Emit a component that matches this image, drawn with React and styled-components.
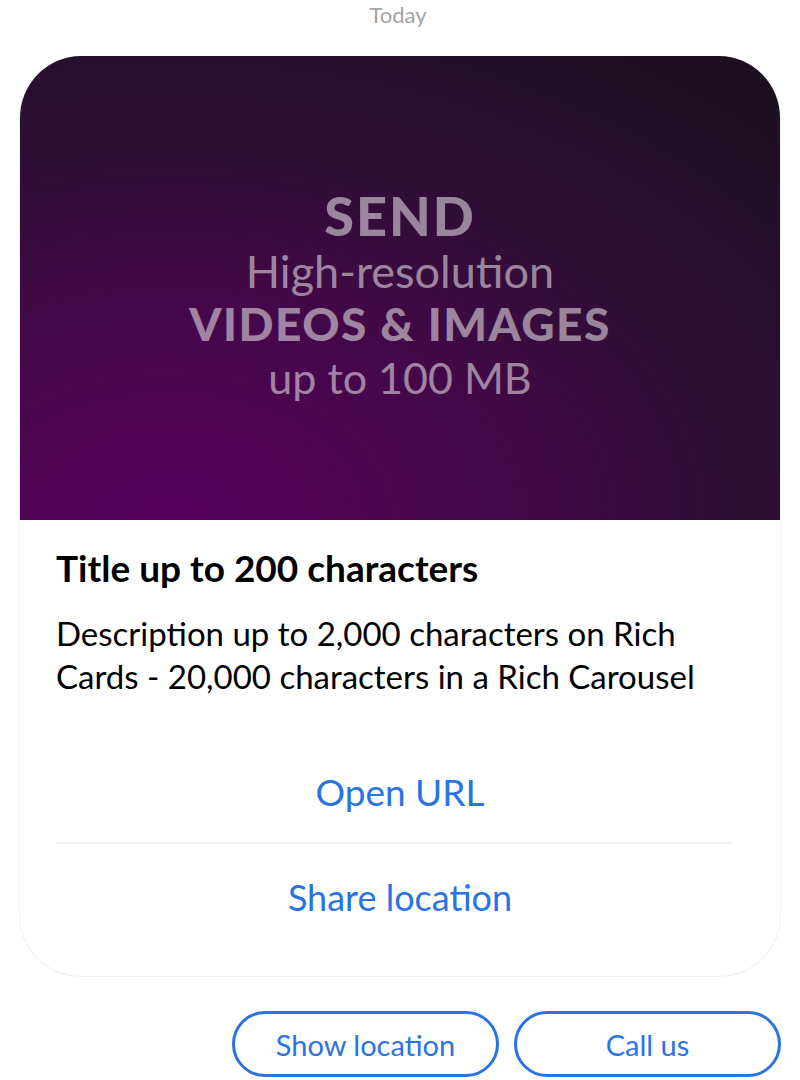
import React from "react";
import styled, { createGlobalStyle } from "styled-components";

const GlobalStyle = createGlobalStyle`
  body {
    margin: 0;
    background: #ffffff;
    font-family: "Lato", "Open Sans", sans-serif;
  }
`;

const Page = styled.div`
  width: 800px;
  height: 1080px;
  display: flex;
  flex-direction: column;
  overflow: hidden;
`;

const DateLabel = styled.div`
  height: 30px;
  line-height: 30px;
  text-align: center;
  font-size: 22px;
  color: #a3a3a3;
  margin-left: -4px;
`;

const Card = styled.div`
  margin: 26px 19px 0;
  border: 1px solid #efefef;
  border-top: none;
  border-radius: 62px;
  overflow: hidden;
  background: #ffffff;
`;

const Media = styled.div`
  height: 464px;
  margin: 0 -1px;
  background: radial-gradient(
    ellipse 120% 130% at 20% 100%,
    #57005c 0%,
    #440849 35%,
    #2c0f33 65%,
    #1b0f1f 100%
  );
  display: flex;
  flex-direction: column;
  align-items: center;
  justify-content: center;
  padding-top: 18px;
  box-sizing: border-box;
  color: rgba(255, 255, 255, 0.5);
  text-align: center;
`;

const PromoLine = styled.div`
  font-size: ${({ size }) => size}px;
  font-weight: ${({ bold }) => (bold ? 900 : 400)};
  line-height: ${({ lh }) => lh}px;
  letter-spacing: ${({ spacing }) => spacing || 0}px;
`;

const Body = styled.div`
  padding: 25px 36px 0;
`;

const Title = styled.h2`
  margin: 0;
  font-size: 37px;
  font-weight: 700;
  color: #000000;
  line-height: 46px;
`;

const Description = styled.p`
  margin: 21px 0 0;
  font-size: 33px;
  line-height: 43px;
  color: #000000;
`;

const Actions = styled.div`
  margin-top: 40px;
  padding-bottom: 26px;
`;

const Action = styled.div`
  position: relative;
  height: 106px;
  display: flex;
  align-items: center;
  justify-content: center;
  font-size: ${({ size }) => size}px;
  color: #2a73e2;

  &::after {
    content: "";
    display: ${({ divider }) => (divider ? "block" : "none")};
    position: absolute;
    left: 0;
    right: 12px;
    bottom: 0;
    height: 2px;
    background: #f1f1f1;
  }
`;

const Chips = styled.div`
  display: flex;
  justify-content: flex-end;
  gap: 15px;
  padding: 34px 19px 0;
`;

const Chip = styled.div`
  width: 267px;
  height: 66px;
  box-sizing: border-box;
  border: 3px solid #2a73e2;
  border-radius: 33px;
  display: flex;
  align-items: center;
  justify-content: center;
  font-size: 29px;
  color: #2a73e2;
`;

export default function App() {
  return (
    <Page>
      <GlobalStyle />
      <DateLabel>Today</DateLabel>
      <Card>
        <Media>
          <PromoLine size={54} lh={56} spacing={2} bold>
            SEND
          </PromoLine>
          <PromoLine size={45} lh={54}>
            High-resolution
          </PromoLine>
          <PromoLine size={46} lh={52} spacing={1.5} bold>
            VIDEOS &amp; IMAGES
          </PromoLine>
          <PromoLine size={43} lh={56}>
            up to 100 MB
          </PromoLine>
        </Media>
        <Body>
          <Title>Title up to 200 characters</Title>
          <Description>
            Description up to 2,000 characters on Rich Cards - 20,000
            characters in a Rich Carousel
          </Description>
          <Actions>
            <Action divider size={37}>
              Open URL
            </Action>
            <Action size={36}>Share location</Action>
          </Actions>
        </Body>
      </Card>
      <Chips>
        <Chip>Show location</Chip>
        <Chip>Call us</Chip>
      </Chips>
    </Page>
  );
}
